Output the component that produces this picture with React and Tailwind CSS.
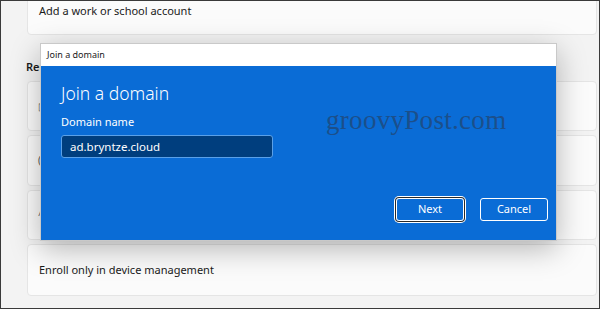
import React from "react";

const font = { fontFamily: '"Noto Sans", "Open Sans", sans-serif' };

const Card = ({ className = "", children }) => (
  <div
    className={
      "ml-[26px] mr-[2px] rounded-[4px] border border-[#e5e5e5] bg-[#fbfbfb] " +
      className
    }
  >
    {children}
  </div>
);

const JoinDomainDialog = () => (
  <div className="absolute left-[39px] top-[42px] flex h-[198px] w-[517px] flex-col border border-[#c9c9c9] shadow-[0_8px_28px_rgba(0,0,0,0.28)]">
    <div className="flex h-[22px] items-center bg-white pl-[6px] text-[9px] text-[#1a1a1a]">
      Join a domain
    </div>
    <div className="relative flex flex-1 flex-col bg-[#0a6cd6] pl-[20px] pr-[8px] text-white">
      <div className="mt-[15px] text-[17.5px] font-light leading-[24px]">
        Join a domain
      </div>
      <div className="mt-[10px] text-[11px] leading-[14px]">Domain name</div>
      <div className="mt-[6px] flex h-[23px] w-[212px] items-center rounded-[3px] border border-[#5aa0e8] bg-[#003e7e] pl-[8px] text-[11.5px]">
        ad.bryntze.cloud
      </div>
      <div className="mt-auto mb-[19px] flex justify-end gap-[16px]">
        <button className="flex h-[23px] w-[68px] items-center justify-center rounded-[3px] border border-white text-[11px] shadow-[0_0_0_1px_#2a2a2a,0_0_0_2px_#ffffff]">
          Next
        </button>
        <button className="flex h-[23px] w-[68px] items-center justify-center rounded-[3px] border border-white text-[11px]">
          Cancel
        </button>
      </div>
      <div
        className="absolute left-[285px] top-[38px] text-[27px] leading-[32px] text-[#1c4f8a]"
        style={{ fontFamily: '"Liberation Serif", serif', letterSpacing: "0.3px" }}
      >
        groovyPost.com
      </div>
    </div>
  </div>
);

export default function App() {
  return (
    <div
      className="relative h-[309px] w-[600px] overflow-hidden border border-[#3a3a3a] bg-[#f3f3f3] text-[#1a1a1a]"
      style={font}
    >
      <Card className="-mt-[4px] h-[38px] rounded-t-none pl-[11px] pt-[5px] text-[11px]">
        Add a work or school account
      </Card>
      <div className="ml-[25px] mt-[25px] text-[11px] font-semibold leading-[14px]">
        Related settings
      </div>
      <div className="mt-[7px] flex flex-col gap-[4px]">
        <Card className="flex h-[50px] items-center pl-[10px] text-[10px] text-[#555]">
          ▯
        </Card>
        <Card className="flex h-[51px] items-center pl-[10px] text-[10px] text-[#555]">
          (
        </Card>
        <Card className="flex h-[50px] items-center pl-[10px] text-[10px] text-[#555]">
          ^
        </Card>
        <Card className="flex h-[52px] items-center pl-[11px] text-[11px]">
          Enroll only in device management
        </Card>
      </div>
      <JoinDomainDialog />
    </div>
  );
}
